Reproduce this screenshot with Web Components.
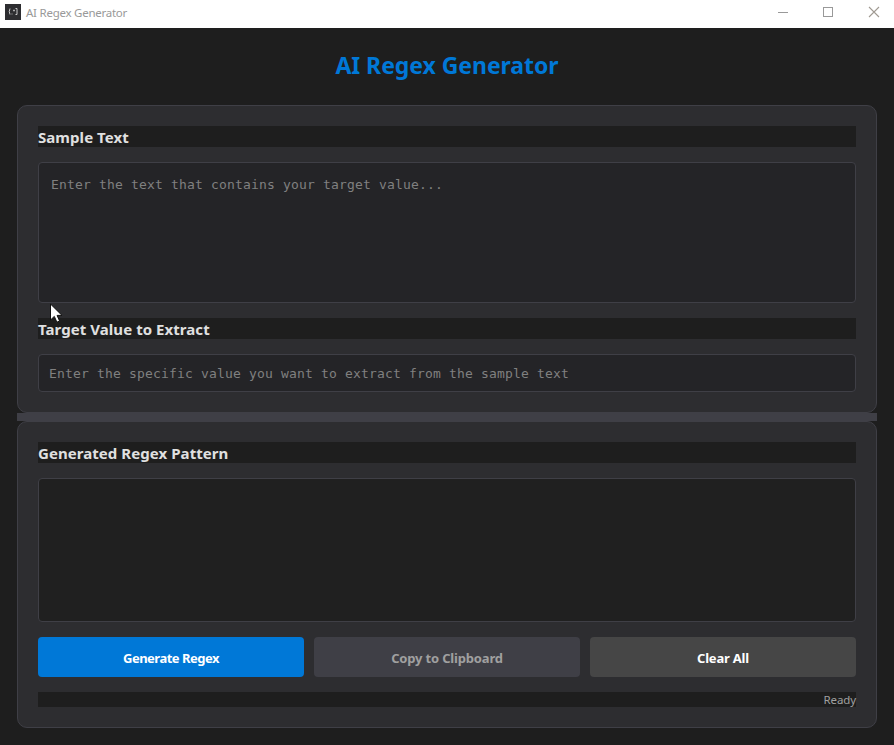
<!DOCTYPE html>
<html lang="en">
<head>
<meta charset="utf-8">
<title>AI Regex Generator</title>
<style>
html, body { margin: 0; height: 100%; overflow: hidden; background: #1e1e1e; }
body { font-family: "Noto Sans", "Open Sans", sans-serif; color: #e0e0e0; }
</style>
</head>
<body>
<regex-app></regex-app>
<script>
const define = (name, html) => customElements.define(name, class extends HTMLElement {
  constructor() {
    super();
    const t = document.createElement('template');
    t.innerHTML = html;
    this.attachShadow({ mode: 'open' }).append(t.content.cloneNode(true));
  }
});

define('title-bar', `
<style>
:host { display: flex; align-items: center; height: 28px; box-sizing: border-box; padding: 0 14px 4px 5px; background: #fff; color: #999; font-size: 11.5px; }
.name { margin-left: 5px; line-height: 16px; letter-spacing: -0.25px; white-space: nowrap; flex: 1; padding-top: 2px; }
svg { display: block; }
.controls { display: flex; gap: 34px; }
</style>
<svg width="16" height="16" viewBox="0 0 16 16"><rect width="16" height="16" fill="#2d2d30"/><g fill="none" stroke="#c8c8c8" stroke-width="1"><path d="M5 4.500Q3.500 7.500 5 10.500M10.500 4.500h1.500v6h-1.500"/><path d="M6.500 10h1M8 6.500h2M9 5.500v2" stroke="#aaa"/></g></svg>
<span class="name"><slot></slot></span>
<div class="controls">
<svg width="12" height="12" viewBox="0 0 12 12"><path d="M2 6.500h10" stroke="#999" fill="none"/></svg>
<svg width="12" height="12" viewBox="0 0 12 12"><rect x="1.500" y="1.500" width="9" height="9" stroke="#999" fill="none"/></svg>
<svg width="12" height="12" viewBox="0 0 12 12"><path d="M1 1l10 10M11 1L1 11" stroke="#a09a92" fill="none" stroke-width="1.100"/></svg>
</div>`);

define('app-heading', `
<style>
:host { display: block; height: 77px; box-sizing: border-box; padding-top: 21px; text-align: center; font-size: 23px; font-weight: 700; line-height: 32px; color: #0078d7; letter-spacing: -0.05px; }
</style><slot></slot>`);

define('app-panel', `
<style>
:host { display: flex; flex-direction: column; gap: 15px; box-sizing: border-box; padding: 20px; border: 1px solid #3f3f46; border-radius: 10px; background: #2d2d30; }
</style><slot></slot>`);

define('panel-splitter', `<style>:host { display: block; height: 8px; background: #3f3f46; }</style>`);

define('field-label', `
<style>
:host { display: block; height: 21px; background: #1e1e1e; font-size: 15px; font-weight: 700; line-height: 22px; color: #e0e0e0; white-space: nowrap; letter-spacing: 0.06px; }
</style><slot></slot>`);

define('code-field', `
<style>
:host { display: block; box-sizing: border-box; border: 1px solid #3f3f46; border-radius: 4px; background: #242427; color: #808080; font-family: "DejaVu Sans Mono", "Liberation Mono", monospace; font-size: 13px; line-height: 18px; letter-spacing: 0.174px; white-space: nowrap; }
:host([kind="area"]) { height: 141px; padding: 13px 12px; }
:host([kind="line"]) { height: 38px; padding: 10px 10px 8px; }
:host([kind="output"]) { height: 144px; background: #202020; }
</style><slot></slot>`);

define('button-row', `<style>:host { display: grid; grid-template-columns: repeat(3, 1fr); gap: 10px; }</style><slot></slot>`);

define('app-button', `
<style>
:host { display: block; }
button { display: block; width: 100%; height: 40px; border: 0; border-radius: 4px; padding: 1px 0 0; font: 700 13px/20px "Noto Sans", "Open Sans", sans-serif; color: #fff; background: #464646; letter-spacing: -0.2px; }
:host([kind="primary"]) button { background: #0078d7; letter-spacing: -0.5px; }
:host([kind="disabled"]) button { background: #3f3f46; color: #a0a0a0; letter-spacing: -0.17px; }
</style><button><slot></slot></button>`);

define('status-line', `
<style>
:host { display: block; height: 15px; background: #1e1e1e; color: #a0a0a0; font-size: 11.5px; line-height: 16px; text-align: right; letter-spacing: -0.1px; }
</style><slot></slot>`);

define('mouse-pointer', `
<style>:host { position: absolute; left: 50px; top: 303px; } svg { display: block; }</style>
<svg width="13" height="21" viewBox="0 0 13 21"><path d="M.5 1v16l3.800-3.600 2.600 5.800 2.700-1.200-2.500-5.600H12z" fill="#fff" stroke="#111" stroke-width="1"/></svg>`);

define('regex-app', `
<style>
:host { display: block; }
main { padding: 0 17px; }
</style>
<title-bar>AI Regex Generator</title-bar>
<main>
<app-heading>AI Regex Generator</app-heading>
<app-panel>
<field-label>Sample Text</field-label>
<code-field kind="area">Enter the text that contains your target value...</code-field>
<field-label>Target Value to Extract</field-label>
<code-field kind="line">Enter the specific value you want to extract from the sample text</code-field>
</app-panel>
<panel-splitter></panel-splitter>
<app-panel>
<field-label>Generated Regex Pattern</field-label>
<code-field kind="output"></code-field>
<button-row>
<app-button kind="primary">Generate Regex</app-button>
<app-button kind="disabled">Copy to Clipboard</app-button>
<app-button>Clear All</app-button>
</button-row>
<status-line>Ready</status-line>
</app-panel>
</main>
<mouse-pointer></mouse-pointer>`);
</script>
</body>
</html>
